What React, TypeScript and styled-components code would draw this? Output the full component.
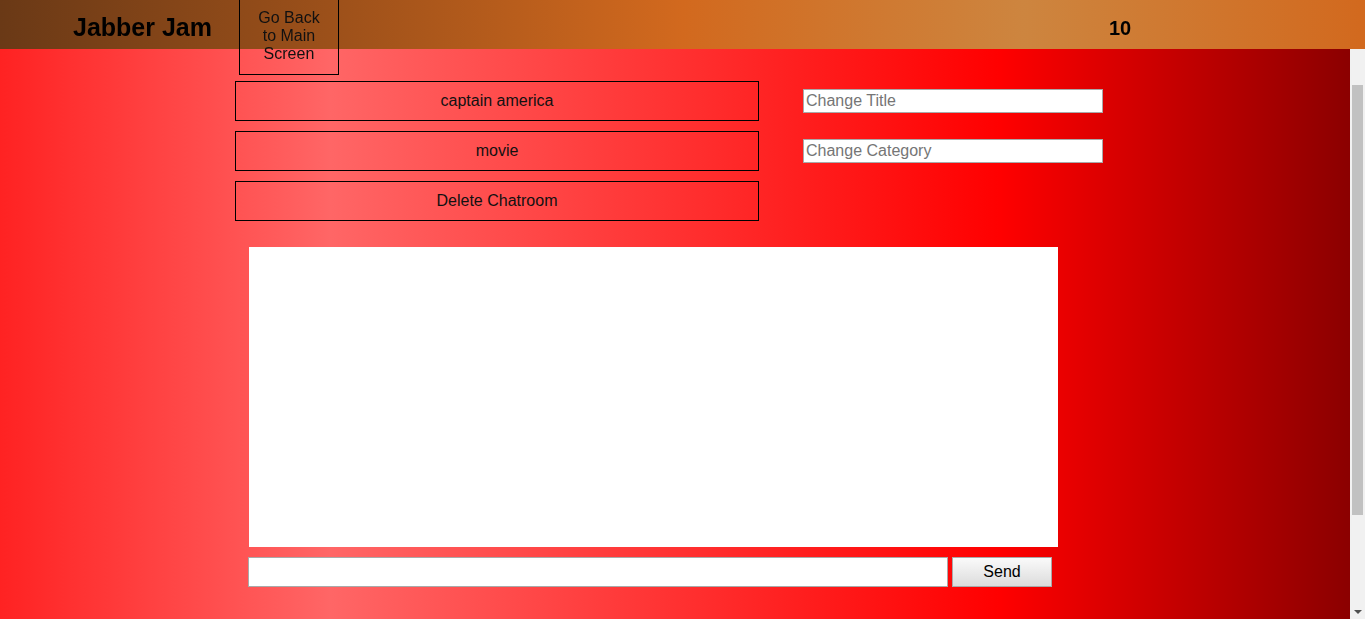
import React, { useLayoutEffect } from 'react';
import styled, { createGlobalStyle } from 'styled-components';

const GlobalStyle = createGlobalStyle`
  html {
    overflow-y: scroll;
  }
  body {
    margin: 0;
    font-family: "Liberation Sans", Arial, sans-serif;
    font-size: 16px;
    background: #f1f1f1;
  }
`;

const Page = styled.div`
  width: calc(100vw - 15px);
  min-height: 848px;
  background: linear-gradient(to right, #ff2222 0%, #ff6666 24.5%, #ff0000 74%, #8b0000 100%);
`;

const Header = styled.header`
  position: fixed;
  top: 0;
  left: 0;
  width: 100vw;
  height: 49px;
  z-index: 10;
  display: flex;
  align-items: flex-start;
  background: linear-gradient(to right, #6a3916 0%, #d2691e 50%, #cd853f 75%, #d2691e 100%);
`;

const Title = styled.h1`
  margin: 13px 0 0 73px;
  font-size: 25px;
  font-weight: 700;
  line-height: 29px;
  color: #000;
`;

const BackButton = styled.button`
  margin: -3px 0 0 27px;
  width: 100px;
  height: 78px;
  padding: 0 12px;
  background: transparent;
  border: 1px solid #000;
  font-family: inherit;
  font-size: 16px;
  line-height: 18px;
  color: #111;
  cursor: pointer;
`;

const Score = styled.div`
  margin: 16px 0 0 770px;
  font-size: 20px;
  font-weight: 700;
  line-height: 24px;
  color: #000;
`;

/* the window's scroll bar, drawn since the headless browser hides it */
const ScrollTrack = styled.div`
  position: fixed;
  top: 0;
  right: 0;
  width: 15px;
  height: 100vh;
  z-index: 5;
  background: #f1f1f1;
`;

const ScrollThumb = styled.div`
  position: absolute;
  top: 85px;
  left: 2px;
  width: 11px;
  height: 430px;
  background: #c1c1c1;
`;

const ScrollArrow = styled.div`
  position: absolute;
  bottom: 5px;
  left: 4px;
  width: 0;
  height: 0;
  border-left: 4px solid transparent;
  border-right: 4px solid transparent;
  border-top: 4px solid #505050;
`;

const Main = styled.main`
  padding: 182px 0 160px 235px;
`;

const Controls = styled.div`
  display: grid;
  grid-template-columns: 524px 300px;
  column-gap: 44px;
  row-gap: 10px;
  align-items: center;
`;

const RoomButton = styled.button`
  height: 40px;
  width: 524px;
  background: transparent;
  border: 1px solid #000;
  font-family: inherit;
  font-size: 16px;
  color: #111;
  cursor: pointer;
`;

const TextField = styled.input<{ $w: number; $h: number }>`
  box-sizing: border-box;
  width: ${(p) => p.$w}px;
  height: ${(p) => p.$h}px;
  padding: 1px 2px;
  border: 1px solid #a9a9a9;
  background: #fff;
  font-family: inherit;
  font-size: 16px;
  color: #000;
  outline: none;
  &::placeholder {
    color: #757575;
  }
`;

const Chat = styled.section`
  margin: 26px 0 0 14px;
  display: flex;
  flex-direction: column;
  gap: 10px;
`;

const Messages = styled.div`
  width: 809px;
  height: 300px;
  background: #fff;
`;

const SendRow = styled.form`
  display: flex;
  gap: 4px;
  margin-left: -1px;
`;

const SendButton = styled.button`
  box-sizing: border-box;
  width: 100px;
  height: 30px;
  border: 1px solid #a9a9a9;
  background: linear-gradient(to bottom, #fafafa, #dcdcdc);
  font-family: inherit;
  font-size: 16px;
  color: #000;
  cursor: pointer;
`;

export default function App() {
  useLayoutEffect(() => {
    window.scrollTo(0, 101);
  }, []);

  return (
    <Page>
      <GlobalStyle />
      <Header>
        <Title>Jabber Jam</Title>
        <BackButton>Go Back to Main Screen</BackButton>
        <Score>10</Score>
      </Header>
      <ScrollTrack>
        <ScrollThumb />
        <ScrollArrow />
      </ScrollTrack>
      <Main>
        <Controls>
          <RoomButton>captain america</RoomButton>
          <TextField $w={300} $h={24} placeholder="Change Title" />
          <RoomButton>movie</RoomButton>
          <TextField $w={300} $h={24} placeholder="Change Category" />
          <RoomButton>Delete Chatroom</RoomButton>
        </Controls>
        <Chat>
          <Messages />
          <SendRow onSubmit={(e) => e.preventDefault()}>
            <TextField $w={700} $h={30} />
            <SendButton type="submit">Send</SendButton>
          </SendRow>
        </Chat>
      </Main>
    </Page>
  );
}
